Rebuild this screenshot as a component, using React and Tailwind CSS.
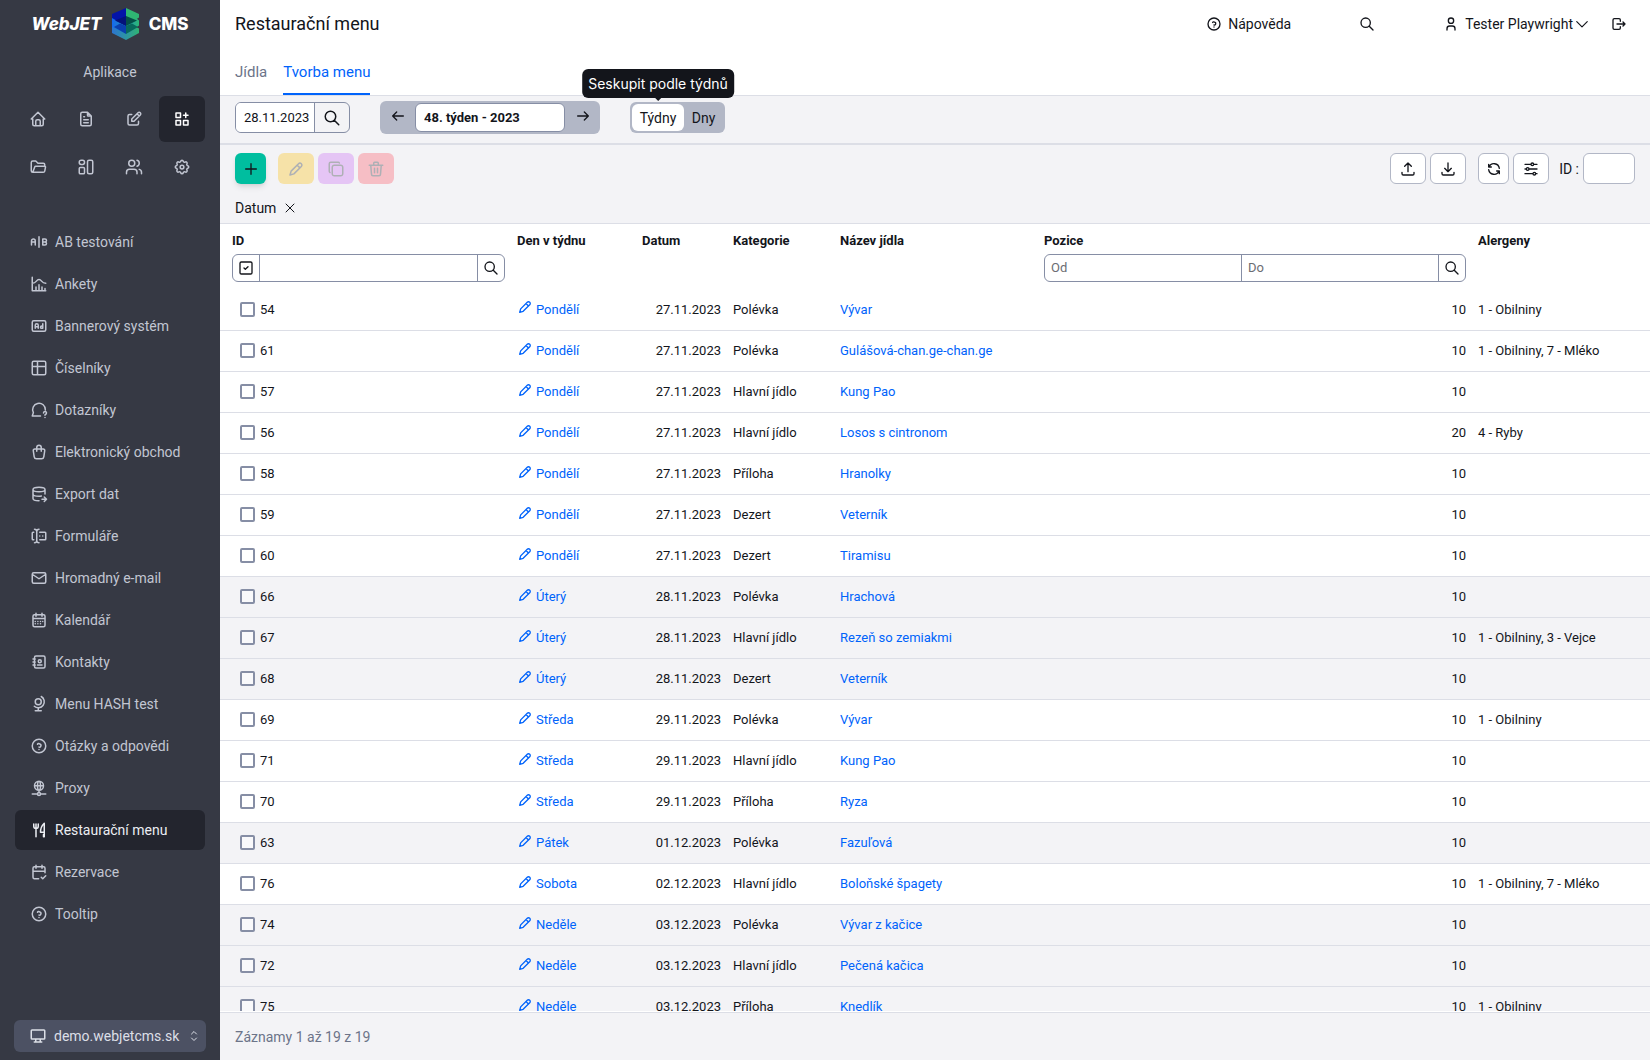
import React from "react";

const PATHS = {
  home: "M5 12H3l9-9l9 9h-2M5 12v7a2 2 0 0 0 2 2h10a2 2 0 0 0 2-2v-7M9 21v-6a2 2 0 0 1 2-2h2a2 2 0 0 1 2 2v6",
  file: "M14 3v4a1 1 0 0 0 1 1h4M17 21H7a2 2 0 0 1-2-2V5a2 2 0 0 1 2-2h7l5 5v11a2 2 0 0 1-2 2zM9 9h1M9 13h6M9 17h6",
  edit: "M9 6H6a2 2 0 0 0-2 2v10a2 2 0 0 0 2 2h10a2 2 0 0 0 2-2v-3M20.385 6.585a2.1 2.1 0 0 0-2.97-2.97L9 12v3h3l8.385-8.415zM16 5l3 3",
  apps: "M4 4h6v6H4zM4 14h6v6H4zM14 14h6v6h-6zM14 7h6M17 4v6",
  folder: "M5 19l2.757-7.351A1 1 0 0 1 8.693 11H21a1 1 0 0 1 .986 1.164l-.996 5.211A2 2 0 0 1 19.026 19H5a2 2 0 0 1-2-2V6a2 2 0 0 1 2-2h4l3 3h7a2 2 0 0 1 2 2v2",
  cards: "M5.500 3h2A2.500 2.500 0 0 1 10 5.500v.500a2.500 2.500 0 0 1-2.500 2.500h-2A2.500 2.500 0 0 1 3 6v-.500A2.500 2.500 0 0 1 5.500 3zM4.500 12.500h4A1.500 1.500 0 0 1 10 14v5.500a1.500 1.500 0 0 1-1.500 1.500h-4A1.500 1.500 0 0 1 3 19.500V14a1.500 1.500 0 0 1 1.500-1.500zM16 3h3a2 2 0 0 1 2 2v14a2 2 0 0 1-2 2h-3a2 2 0 0 1-2-2V5a2 2 0 0 1 2-2z",
  users: "M5 7a4 4 0 1 0 8 0a4 4 0 1 0-8 0M2 21v-2a4 4 0 0 1 4-4h6a4 4 0 0 1 4 4v2M16 3.130a4 4 0 0 1 0 7.750M22 21v-2a4 4 0 0 0-3-3.850",
  gear: "M10.325 4.317c.426-1.756 2.924-1.756 3.350 0a1.724 1.724 0 0 0 2.573 1.066c1.543-.94 3.310.826 2.370 2.370a1.724 1.724 0 0 0 1.065 2.572c1.756.426 1.756 2.924 0 3.350a1.724 1.724 0 0 0-1.066 2.573c.94 1.543-.826 3.310-2.370 2.370a1.724 1.724 0 0 0-2.572 1.065c-.426 1.756-2.924 1.756-3.350 0a1.724 1.724 0 0 0-2.573-1.066c-1.543.94-3.310-.826-2.370-2.370a1.724 1.724 0 0 0-1.065-2.572c-1.756-.426-1.756-2.924 0-3.350a1.724 1.724 0 0 0 1.066-2.573c-.94-1.543.826-3.310 2.370-2.370c1 .608 2.296.07 2.572-1.065zM9.500 12a2.500 2.500 0 1 0 5 0a2.500 2.500 0 0 0-5 0",
  ab: "M2 16v-5.500a2.500 2.500 0 0 1 5 0V16M7 12H2M12 5v14M17 16V8h3a2 2 0 0 1 0 4h-3h3a2 2 0 0 1 0 4h-3z",
  chart: "M3 3v18h18M20 18v3M16 16v5M12 13v8M8 16v5M3 11c6 0 5-5 9-5s3 5 9 5",
  ad: "M5 5h14a2 2 0 0 1 2 2v10a2 2 0 0 1-2 2H5a2 2 0 0 1-2-2V7a2 2 0 0 1 2-2zM7 15v-4a2 2 0 0 1 4 0v4M7 13h4M17 9v6h-1.500a1.500 1.500 0 1 1 1.500-1.500",
  table: "M5 3h14a2 2 0 0 1 2 2v14a2 2 0 0 1-2 2H5a2 2 0 0 1-2-2V5a2 2 0 0 1 2-2zM3 10h18M10 3v18",
  survey: "M14 20H3l1.500-4.500A8.500 8.500 0 1 1 20.500 12M18 16a2 2 0 1 1 2.500 1.900c-.5.200-.5.600-.5 1.100M20 22v.01",
  bag: "M6.331 8h11.339a2 2 0 0 1 1.977 2.304l-1.255 8.152A3 3 0 0 1 15.426 21H8.574a3 3 0 0 1-2.965-2.544l-1.255-8.152A2 2 0 0 1 6.331 8zM9 11V6a3 3 0 0 1 6 0v5",
  dbExport: "M4 6c0 1.657 3.582 3 8 3s8-1.343 8-3s-3.582-3-8-3s-8 1.343-8 3M4 6v6c0 1.657 3.582 3 8 3c1.118 0 2.183-.086 3.150-.241M20 12V6M4 12v6c0 1.657 3.582 3 8 3M16 19h6M19 16l3 3l-3 3",
  forms: "M12 3a3 3 0 0 0-3 3v12a3 3 0 0 0 3 3M6 3a3 3 0 0 1 3 3v12a3 3 0 0 1-3 3M13 7h7a1 1 0 0 1 1 1v8a1 1 0 0 1-1 1h-7M5 7H4a1 1 0 0 0-1 1v8a1 1 0 0 0 1 1h1M17 12h.01M13 12h.01",
  mail: "M5 5h14a2 2 0 0 1 2 2v10a2 2 0 0 1-2 2H5a2 2 0 0 1-2-2V7a2 2 0 0 1 2-2zM3 7l9 6l9-6",
  calendar: "M6 5h12a2 2 0 0 1 2 2v12a2 2 0 0 1-2 2H6a2 2 0 0 1-2-2V7a2 2 0 0 1 2-2zM16 3v4M8 3v4M4 10h16M7 14h.01M10.500 14h.01M14 14h.01M17 14h.01M7 17h.01M10.500 17h.01M14 17h.01",
  contacts: "M20 6v12a2 2 0 0 1-2 2H8a2 2 0 0 1-2-2V6a2 2 0 0 1 2-2h10a2 2 0 0 1 2 2zM10 16h6M11 11a2 2 0 1 0 4 0a2 2 0 1 0-4 0M4 8h3M4 12h3M4 16h3",
  globe: "M7 9a4 4 0 1 0 8 0a4 4 0 1 0-8 0M5.750 15A8.015 8.015 0 1 0 15 2M11 17v4M7 21h8",
  help: "M3 12a9 9 0 1 0 18 0a9 9 0 1 0-18 0M12 16.500v.01M12 13.500a2 2 0 0 0 .914-4.282a1.980 1.980 0 0 0-2.914.483",
  network: "M6 9a6 6 0 1 0 12 0a6 6 0 0 0-12 0M12 3c1.333.333 2 2.333 2 6s-.667 5.667-2 6M12 3c-1.333.333-2 2.333-2 6s.667 5.667 2 6M6 9h12M3 20h7M14 20h7M10 20a2 2 0 1 0 4 0a2 2 0 0 0-4 0M12 15v3",
  kitchen: "M19 3v12h-5c-.023-3.681.184-7.406 5-12zM19 15v6h-1v-3M8 4v17M5 4v3a3 3 0 1 0 6 0V4",
  calCheck: "M11.500 21H6a2 2 0 0 1-2-2V7a2 2 0 0 1 2-2h12a2 2 0 0 1 2 2v6M16 3v4M8 3v4M4 11h16M15 19l2 2l4-4",
  desktop: "M4 4h16a1 1 0 0 1 1 1v10a1 1 0 0 1-1 1H4a1 1 0 0 1-1-1V5a1 1 0 0 1 1-1zM7 20h10M9 16v4M15 16v4",
  selector: "M7 8l5-5l5 5M17 16l-5 5l-5-5",
  search: "M3 10a7 7 0 1 0 14 0a7 7 0 1 0-14 0M21 21l-6-6",
  user: "M8 7a4 4 0 1 0 8 0a4 4 0 0 0-8 0M6 21v-2a4 4 0 0 1 4-4h4a4 4 0 0 1 4 4v2",
  chevron: "M3 8l9 9l9-9",
  logout: "M14 8V6a2 2 0 0 0-2-2H5a2 2 0 0 0-2 2v12a2 2 0 0 0 2 2h7a2 2 0 0 0 2-2v-2M9 12h12l-3-3M18 15l3-3",
  left: "M4 12h16M4 12l6 6M4 12l6-6",
  right: "M4 12h16M20 12l-6 6M20 12l-6-6",
  plus: "M12 4v16M4 12h16",
  pencil: "M5.500 14.800L15.400 4.900a2.600 2.600 0 0 1 3.700 3.700L9.200 18.500L4 20zM13.500 6.800l3.700 3.700",
  copy: "M9.700 7h8.600A2.700 2.700 0 0 1 21 9.700v8.600a2.700 2.700 0 0 1-2.700 2.700H9.700A2.700 2.700 0 0 1 7 18.300V9.700A2.700 2.700 0 0 1 9.700 7zM4 16.700A2 2 0 0 1 3 15V5a2 2 0 0 1 2-2h10c.75 0 1.200.400 1.500 1",
  trash: "M3 7h18M10 11v6M14 11v6M5 7l1 12a2 2 0 0 0 2 2h8a2 2 0 0 0 2-2l1-12M9 7V4a1 1 0 0 1 1-1h4a1 1 0 0 1 1 1v3",
  upload: "M3 17v2a2 2 0 0 0 2 2h14a2 2 0 0 0 2-2v-2M7 8l5-5l5 5M12 3v13",
  download: "M3 17v2a2 2 0 0 0 2 2h14a2 2 0 0 0 2-2v-2M7 11l5 5l5-5M12 3v13",
  refresh: "M20 11A8.100 8.100 0 0 0 4.500 9M4 5v4h4M4 13a8.100 8.100 0 0 0 15.500 2M20 19v-4h-4",
  sliders: "M12 5a2 2 0 1 0 4 0a2 2 0 1 0-4 0M3 5h9M16 5h5M5 12a2 2 0 1 0 4 0a2 2 0 1 0-4 0M3 12h2M9 12h12M15 19a2 2 0 1 0 4 0a2 2 0 1 0-4 0M3 19h12M19 19h2",
  close: "M20 4L4 20M4 4l16 16",
  checkSquare: "M5 3h14a2 2 0 0 1 2 2v14a2 2 0 0 1-2 2H5a2 2 0 0 1-2-2V5a2 2 0 0 1 2-2zM9 12l2 2l4-4",
};

function Icon({ name, className = "size-[18px]" }) {
  return (
    <svg
      viewBox="0 0 24 24"
      fill="none"
      stroke="currentColor"
      strokeWidth="2"
      strokeLinecap="round"
      strokeLinejoin="round"
      aria-hidden="true"
      className={"shrink-0 " + className}
    >
      <path d={PATHS[name]} />
    </svg>
  );
}

const SECTIONS = [
  ["home", "Úvod"],
  ["file", "Web stránky"],
  ["edit", "Šablony"],
  ["apps", "Aplikace"],
  ["folder", "Soubory"],
  ["cards", "Bloky"],
  ["users", "Uživatelé"],
  ["gear", "Nastavení"],
];

const NAV = [
  ["ab", "AB testování"],
  ["chart", "Ankety"],
  ["ad", "Bannerový systém"],
  ["table", "Číselníky"],
  ["survey", "Dotazníky"],
  ["bag", "Elektronický obchod"],
  ["dbExport", "Export dat"],
  ["forms", "Formuláře"],
  ["mail", "Hromadný e-mail"],
  ["calendar", "Kalendář"],
  ["contacts", "Kontakty"],
  ["globe", "Menu HASH test"],
  ["help", "Otázky a odpovědi"],
  ["network", "Proxy"],
  ["kitchen", "Restaurační menu"],
  ["calCheck", "Rezervace"],
  ["help", "Tooltip"],
];

const ROWS = [
  [54, "Pondělí", "27.11.2023", "Polévka", "Vývar", 10, "1 - Obilniny", false],
  [61, "Pondělí", "27.11.2023", "Polévka", "Gulášová-chan.ge-chan.ge", 10, "1 - Obilniny, 7 - Mléko", false],
  [57, "Pondělí", "27.11.2023", "Hlavní jídlo", "Kung Pao", 10, "", false],
  [56, "Pondělí", "27.11.2023", "Hlavní jídlo", "Losos s cintronom", 20, "4 - Ryby", false],
  [58, "Pondělí", "27.11.2023", "Příloha", "Hranolky", 10, "", false],
  [59, "Pondělí", "27.11.2023", "Dezert", "Veterník", 10, "", false],
  [60, "Pondělí", "27.11.2023", "Dezert", "Tiramisu", 10, "", false],
  [66, "Úterý", "28.11.2023", "Polévka", "Hrachová", 10, "", true],
  [67, "Úterý", "28.11.2023", "Hlavní jídlo", "Rezeň so zemiakmi", 10, "1 - Obilniny, 3 - Vejce", true],
  [68, "Úterý", "28.11.2023", "Dezert", "Veterník", 10, "", true],
  [69, "Středa", "29.11.2023", "Polévka", "Vývar", 10, "1 - Obilniny", false],
  [71, "Středa", "29.11.2023", "Hlavní jídlo", "Kung Pao", 10, "", false],
  [70, "Středa", "29.11.2023", "Příloha", "Ryza", 10, "", false],
  [63, "Pátek", "01.12.2023", "Polévka", "Fazuľová", 10, "", true],
  [76, "Sobota", "02.12.2023", "Hlavní jídlo", "Boloňské špagety", 10, "1 - Obilniny, 7 - Mléko", false],
  [74, "Neděle", "03.12.2023", "Polévka", "Vývar z kačice", 10, "", true],
  [72, "Neděle", "03.12.2023", "Hlavní jídlo", "Pečená kačica", 10, "", true],
  [75, "Neděle", "03.12.2023", "Příloha", "Knedlík", 10, "1 - Obilniny", true],
];

function Logo() {
  return (
    <a href="#" className="flex h-12 items-center justify-center gap-2.5 font-['Inter'] text-[17px] font-extrabold text-white">
      <span className="italic">WebJET</span>
      <svg viewBox="0 0 27 32" className="h-8 w-[27px]" aria-hidden="true">
        <defs>
          <linearGradient id="base" x1="0" x2="1">
            <stop offset="0" stopColor="#2c74d2" />
            <stop offset="1" stopColor="#2fb473" />
          </linearGradient>
          <linearGradient id="middle" x1="0" x2="1">
            <stop offset="0" stopColor="#1668f0" />
            <stop offset="1" stopColor="#2cb877" />
          </linearGradient>
        </defs>
        <path d="M0 19L14 14L27 20.500V25L14 32L0 25z" fill="url(#base)" />
        <path d="M0 10H24L27 12.500V17.500L14 26L0 19z" fill="url(#middle)" />
        <path d="M14 0L27 6V9.500L14 18z" fill="#2fb673" />
        <path d="M14 0V18L0 10V6z" fill="#0414a8" />
        <path d="M14 8L25 12.500L14 18z" fill="#055048" />
        <path d="M14 8V18L3 12.500z" fill="#04127a" />
        <path d="M14 18L20 15.500L26 19L14 26z" fill="#086a5c" />
        <path d="M14 18L8 15.500L2 19L14 26z" fill="#0a3fae" />
      </svg>
      <span>CMS</span>
    </a>
  );
}

function Sidebar() {
  return (
    <aside className="flex w-[220px] shrink-0 flex-col bg-[#363944] text-sm text-[#c2c6d2]">
      <Logo />
      <div className="flex h-12 items-center justify-center">Aplikace</div>
      <div className="grid grid-cols-4 gap-0.5 px-[15px]">
        {SECTIONS.map(([icon, label]) => (
          <button
            key={icon}
            aria-label={label}
            className={
              "flex h-[46px] items-center justify-center rounded-md " +
              (icon === "apps" ? "bg-[#23252e] text-white" : "")
            }
          >
            <Icon name={icon} />
          </button>
        ))}
      </div>
      <nav className="mt-8 flex flex-col gap-0.5 px-[15px]">
        {NAV.map(([icon, label]) => (
          <a
            key={label}
            href="#"
            className={
              "flex h-10 items-center gap-[7px] rounded-md px-[15px] " +
              (icon === "kitchen" ? "bg-[#23252e] text-[#eceef3]" : "")
            }
          >
            <Icon name={icon} />
            {label}
          </a>
        ))}
      </nav>
      <button className="mx-3.5 mt-auto mb-2 flex h-8 items-center gap-[7px] rounded-md bg-[#4c5163] pr-1.5 pl-[15px] text-left text-[#dcdfe7]">
        <Icon name="desktop" />
        <span className="flex-1">demo.webjetcms.sk</span>
        <Icon name="selector" className="size-3" />
      </button>
    </aside>
  );
}

function Header() {
  return (
    <header className="border-b border-[#dcdee6]">
      <div className="flex h-12 items-center px-[15px]">
        <h1 className="flex-1 text-lg">Restaurační menu</h1>
        <div className="flex items-center text-sm">
          <a href="#" className="flex items-center gap-1.5">
            <Icon name="help" className="size-4" />
            Nápověda
          </a>
          <button aria-label="Hledat" className="mx-[68px]">
            <Icon name="search" className="size-4" />
          </button>
          <button className="flex items-center gap-1.5">
            <Icon name="user" className="size-4" />
            Tester Playwright
            <Icon name="chevron" className="-ml-1 size-3.5" />
          </button>
          <button aria-label="Odhlásit" className="mr-2 ml-[22px]">
            <Icon name="logout" className="size-4" />
          </button>
        </div>
      </div>
      <nav className="flex gap-4 px-[15px] text-[15px]">
        <a href="#" className="flex h-[47px] items-center border-b-2 border-transparent pt-1 text-[#6c7489]">Jídla</a>
        <a href="#" className="flex h-[47px] items-center border-b-2 border-[#0063fb] pt-1 text-[#0063fb]">Tvorba menu</a>
      </nav>
    </header>
  );
}

function FilterBar() {
  return (
    <div className="flex h-[49px] items-center border-b-2 border-[#dcdee6] bg-[#f3f3f6] px-[15px] pb-1">
      <div className="flex h-[31px] w-[115px] overflow-hidden rounded-md border border-[#868ea5]">
        <input aria-label="Den" defaultValue="28.11.2023" className="min-w-0 flex-1 bg-white pl-2 text-[13px]" />
        <button aria-label="Vybrat datum" className="flex w-[35px] items-center justify-center border-l border-[#868ea5]">
          <Icon name="search" />
        </button>
      </div>
      <div className="ml-[30px] flex h-[33px] w-[220px] items-center rounded-md bg-[#b2b7c6]">
        <button aria-label="Předchozí týden" className="flex h-full w-[35px] items-center justify-center pb-1">
          <Icon name="left" className="size-4" />
        </button>
        <input
          aria-label="Týden"
          defaultValue="48. týden - 2023"
          className="h-[29px] min-w-0 flex-1 rounded-md border border-[#868ea5] bg-white px-2 text-[13px] font-bold"
        />
        <button aria-label="Následující týden" className="flex h-full w-[35px] items-center justify-center pb-1">
          <Icon name="right" className="size-4" />
        </button>
      </div>
      <div className="relative ml-[30px] flex h-[31px] rounded-md bg-[#b2b7c6] p-0.5 text-sm">
        <button aria-describedby="group-tip" className="w-[52px] rounded-md bg-white">Týdny</button>
        <button className="w-[39px]">Dny</button>
        <div
          id="group-tip"
          role="tooltip"
          className="absolute bottom-[35px] left-7 flex h-[29px] -translate-x-1/2 items-center rounded-md bg-[#13151b] px-1.5 font-['Inter'] text-sm whitespace-nowrap text-white"
        >
          Seskupit podle týdnů
          <span className="absolute top-full left-1/2 -translate-x-1/2 border-x-3 border-t-3 border-x-transparent border-t-[#13151b]" />
        </div>
      </div>
    </div>
  );
}

const LIGHT_BUTTON = "flex h-[31px] items-center justify-center rounded-md border border-[#b2b7c6] bg-white";

function Toolbar() {
  return (
    <div className="border-b border-[#dcdee6] bg-[#f3f3f6] px-[15px] pt-2">
      <div className="flex h-[31px] items-center">
        <button aria-label="Přidat" className="flex size-[31px] items-center justify-center rounded-md bg-[#00be9f] shadow-md">
          <Icon name="plus" className="size-4" />
        </button>
        <div className="ml-3 flex gap-1 text-[#aeb0b5]">
          <button disabled aria-label="Upravit" className="flex h-[31px] w-9 items-center justify-center rounded-md bg-[#f6e2a8]">
            <Icon name="pencil" />
          </button>
          <button disabled aria-label="Duplikovat" className="flex h-[31px] w-9 items-center justify-center rounded-md bg-[#e5c5f5]">
            <Icon name="copy" />
          </button>
          <button disabled aria-label="Smazat" className="flex h-[31px] w-9 items-center justify-center rounded-md bg-[#f6bec5]">
            <Icon name="trash" />
          </button>
        </div>
        <div className="ml-auto flex gap-1">
          <button aria-label="Import" className={LIGHT_BUTTON + " w-9"}><Icon name="upload" className="size-4" /></button>
          <button aria-label="Export" className={LIGHT_BUTTON + " w-9"}><Icon name="download" className="size-4" /></button>
        </div>
        <div className="ml-3 flex gap-1">
          <button aria-label="Obnovit" className={LIGHT_BUTTON + " w-[31px]"}><Icon name="refresh" className="size-4" /></button>
          <button aria-label="Nastavení tabulky" className={LIGHT_BUTTON + " w-9"}><Icon name="sliders" className="size-4" /></button>
        </div>
        <label className="ml-2.5 flex items-center gap-1 text-sm">
          ID :
          <input className="h-[31px] w-[52px] rounded-md border border-[#b2b7c6] bg-white px-2" />
        </label>
      </div>
      <div className="flex h-[39px] items-center gap-2 pt-2 text-sm">
        Datum
        <button aria-label="Zrušit filtr Datum"><Icon name="close" className="size-3" /></button>
      </div>
    </div>
  );
}

const FILTER = "mt-[3px] flex h-7 overflow-hidden rounded-md border border-[#868ea5] font-normal";
const FIELD = "min-w-0 flex-1 px-1.5 placeholder:text-[#6b6d73]";

function MenuTable() {
  return (
    <div className="min-h-0 flex-1 overflow-hidden">
      <table className="w-full table-fixed border-collapse text-[13px]">
        <colgroup>
          <col className="w-[291px]" />
          <col className="w-[125px]" />
          <col className="w-[91px]" />
          <col className="w-[107px]" />
          <col className="w-[204px]" />
          <col />
          <col className="w-[178px]" />
        </colgroup>
        <thead>
          <tr className="h-[65px] text-left align-top">
            <th className="px-1.5 pt-[7px] pl-3">
              ID
              <div className={FILTER}>
                <button aria-label="Označit vše" className="flex w-[27px] items-center justify-center border-r border-[#868ea5]">
                  <Icon name="checkSquare" className="size-4" />
                </button>
                <input aria-label="Filtr ID" className={FIELD} />
                <button aria-label="Filtrovat ID" className="flex w-[27px] items-center justify-center border-l border-[#868ea5]">
                  <Icon name="search" className="size-4" />
                </button>
              </div>
            </th>
            <th className="px-1.5 pt-[7px]">Den v týdnu</th>
            <th className="px-1.5 pt-[7px]">Datum</th>
            <th className="px-1.5 pt-[7px]">Kategorie</th>
            <th className="px-1.5 pt-[7px]">Název jídla</th>
            <th className="px-1.5 pt-[7px]">
              Pozice
              <div className={FILTER}>
                <input aria-label="Pozice od" placeholder="Od" className={FIELD} />
                <input aria-label="Pozice do" placeholder="Do" className={FIELD + " border-l border-[#868ea5]"} />
                <button aria-label="Filtrovat pozici" className="flex w-[27px] items-center justify-center border-l border-[#868ea5]">
                  <Icon name="search" className="size-4" />
                </button>
              </div>
            </th>
            <th className="px-1.5 pt-[7px]">Alergeny</th>
          </tr>
        </thead>
        <tbody>
          {ROWS.map(([id, day, date, category, name, position, allergens, shaded]) => (
            <tr key={id} className={"h-[41px] border-b border-[#dcdee6] " + (shaded ? "bg-[#f3f3f6]" : "")}>
              <td className="pl-5">
                <label className="flex items-center gap-[5px]">
                  <input type="checkbox" className="size-[15px] appearance-none rounded-xs border-2 border-[#868ea5] bg-white/50" />
                  {id}
                </label>
              </td>
              <td className="px-1.5">
                <a href="#" className="flex items-center gap-[3px] text-[#0063fb]">
                  <Icon name="pencil" className="mb-1 size-4" />
                  {day}
                </a>
              </td>
              <td className="px-1.5 text-right">{date}</td>
              <td className="px-1.5">{category}</td>
              <td className="px-1.5"><a href="#" className="text-[#0063fb]">{name}</a></td>
              <td className="px-1.5 text-right">{position}</td>
              <td className="px-1.5 whitespace-nowrap">{allergens}</td>
            </tr>
          ))}
        </tbody>
      </table>
    </div>
  );
}

export default function App() {
  return (
    <div className="flex h-screen overflow-hidden bg-white font-['Roboto',sans-serif] text-[#13151b]">
      <Sidebar />
      <main className="flex min-w-0 flex-1 flex-col">
        <Header />
        <FilterBar />
        <Toolbar />
        <MenuTable />
        <footer className="mt-px flex h-12 shrink-0 items-center border-t border-[#dcdee6] bg-[#f3f3f6] px-[15px] text-sm text-[#6c7489]">
          Záznamy 1 až 19 z 19
        </footer>
      </main>
    </div>
  );
}
